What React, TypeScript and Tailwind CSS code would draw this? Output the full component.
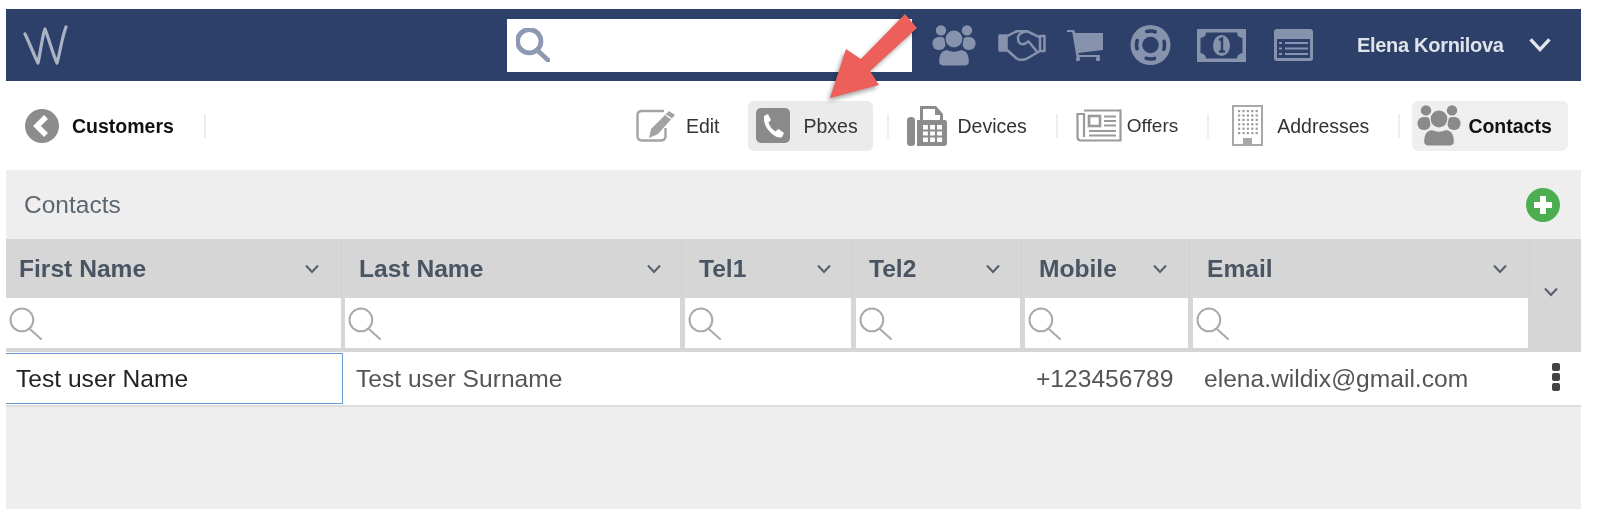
import { JSX } from "react";

const font = "font-['Liberation_Sans',Arial,sans-serif]";

function WLogo(): JSX.Element {
  return (
    <svg width="46" height="41" viewBox="0 0 46 41" fill="none" stroke="#aab2c4" strokeWidth="3.2" strokeLinejoin="round" strokeLinecap="round">
      <path d="M2 9 C6 17 11 30 15 38 C17 30 19 12 22 4 C26 14 30 30 34 38 C37 28 39 12 43 2" />
    </svg>
  );
}

function SearchGlass({ size, color, width }: { size: number; color: string; width: number }): JSX.Element {
  return (
    <svg width={size} height={size} viewBox="0 0 32 32" fill="none" stroke={color} strokeWidth={width} strokeLinecap="round">
      <circle cx="12.5" cy="12.5" r="11" />
      <path d="M20 21 L31 31" />
    </svg>
  );
}

function People({ color, bg, size = 44 }: { color: string; bg: string; size?: number }): JSX.Element {
  return (
    <svg width={size} height={(size * 41) / 44} viewBox="0 0 44 41" fill={color}>
      <circle cx="9" cy="5.4" r="5.2" />
      <circle cx="35" cy="5.4" r="5.2" />
      <rect x="0.5" y="12" width="13" height="13" rx="6" />
      <rect x="30.5" y="12" width="13" height="13" rx="6" />
      <path d="M5 14 Q9 10 13 14 V22 H5 Z M31 14 Q35 10 39 14 V22 H31 Z" />
      <circle cx="22" cy="14" r="9" stroke={bg} strokeWidth="1.2" />
      <path d="M6.5 36 Q6.5 25.5 15 24.5 Q22 28 29 24.5 Q37.5 25.5 37.5 36 Q37.5 41 33 41 H11 Q6.5 41 6.5 36 Z" stroke={bg} strokeWidth="1.2" />
    </svg>
  );
}

function Handshake(): JSX.Element {
  return (
    <svg width="48" height="31" viewBox="0 0 48 31" fill="none" stroke="#8792ad" strokeWidth="2.5" strokeLinejoin="round" strokeLinecap="round">
      <path d="M1.5 5.5 H8.5 V20.5 H1.5 Z" fill="#8792ad" />
      <path d="M42 6 H46.5 V21 H42" />
      <path d="M8.7 6.3 L17 2 Q20 0.8 24 1 H28.7 L42 7.3 V21 L30 28 Q24 31.5 18.7 28.5 L8.7 19.7" />
      <path d="M28.7 1.3 Q21 3 20 7 Q19.5 11 22 13.5 Q26 15.5 30.3 11.3 L38.7 21.3" />
    </svg>
  );
}

function Cart(): JSX.Element {
  return (
    <svg width="36" height="31" viewBox="0 0 36 31" fill="#8792ad">
      <path d="M0 0 H7 L8.5 3 H36 V20 L11.5 23 L12 25 H33 V27 H9.5 L5.2 2 H0 Z" />
      <circle cx="11" cy="29" r="2.2" />
      <circle cx="31" cy="29" r="2.2" />
    </svg>
  );
}

function Lifebuoy(): JSX.Element {
  return (
    <svg width="41" height="40" viewBox="0 0 41 40">
      <circle cx="20.5" cy="20" r="20" fill="#8792ad" />
      <circle cx="20.5" cy="20" r="8.3" fill="#2c4069" />
      <circle cx="20.5" cy="20" r="14" fill="none" stroke="#2c4069" strokeWidth="3.6" strokeLinecap="round" strokeDasharray="8.5 13.5" strokeDashoffset="4.25" />
    </svg>
  );
}

function Money(): JSX.Element {
  return (
    <svg width="49" height="33" viewBox="0 0 49 33">
      <rect width="49" height="33" fill="#8792ad" />
      <path d="M9 3.5 H40 Q40 8 45.5 9 V24 Q40 25 40 29.5 H9 Q9 25 3.5 24 V9 Q9 8 9 3.5 Z" fill="#2c4069" />
      <ellipse cx="24.5" cy="16.5" rx="8.5" ry="10.5" fill="#8792ad" />
      <path d="M22 11 L25 9.5 V22 M22 22.5 H28" fill="none" stroke="#2c4069" strokeWidth="2.4" />
    </svg>
  );
}

function ListCard(): JSX.Element {
  return (
    <svg width="39" height="32" viewBox="0 0 39 32">
      <rect width="39" height="32" rx="3" fill="#8792ad" />
      <rect x="3" y="10" width="33" height="19" fill="#2c4069" />
      <path d="M5 14 H8 M11 14 H34 M5 19.5 H8 M11 19.5 H34 M5 25 H8 M11 25 H34" stroke="#8792ad" strokeWidth="2" />
    </svg>
  );
}

function BackCircle(): JSX.Element {
  return (
    <svg width="34" height="34" viewBox="0 0 34 34">
      <circle cx="17" cy="17" r="17" fill="#8c8c8c" />
      <path d="M21 8 L12 17 L21 26" fill="none" stroke="#fff" strokeWidth="5.5" />
    </svg>
  );
}

function EditIcon(): JSX.Element {
  return (
    <svg width="40" height="33" viewBox="0 0 40 33" fill="none">
      <path d="M28 2 H6 Q1.5 2 1.5 6 V27 Q1.5 31.5 6 31.5 H25 Q29.5 31.5 29.5 27 V19" stroke="#a3a3a3" strokeWidth="2.4" />
      <path d="M33 2 L39 6 L22 25 L13 29 L15 20 Z" fill="#a3a3a3" />
      <path d="M30 6 L35.5 10" stroke="#fff" strokeWidth="1.4" />
    </svg>
  );
}

function PhoneSquare(): JSX.Element {
  return (
    <svg width="34" height="35" viewBox="0 0 34 35">
      <rect width="34" height="35" rx="5" fill="#8a8a8a" />
      <path d="M8 8 L12 6 L15 12 L12.5 14.5 Q14 20 19.5 23.5 L22.5 21 L28 25 L26 29 Q22 31 15 25 Q7 18 8 8 Z" fill="#fff" />
    </svg>
  );
}

function FaxIcon(): JSX.Element {
  return (
    <svg width="40" height="40" viewBox="0 0 40 40" fill="#8c8c8c">
      <rect x="0" y="11" width="8" height="29" rx="3.5" />
      <path d="M13 0 H29 L36 8 V14 H38 Q40 14 40 17 V37 Q40 40 37 40 H10 V14 H13 Z" />
      <path d="M16 3 H28 V9 H33 V14 H16 Z" fill="#fff" />
      <path d="M16 19 H35 V36 H16 Z" fill="#fff" />
      <path d="M22 19 V36 M29 19 V36 M16 24.5 H35 M16 30.5 H35" stroke="#8c8c8c" strokeWidth="2.2" />
    </svg>
  );
}

function NewspaperIcon(): JSX.Element {
  return (
    <svg width="46" height="33" viewBox="0 0 46 33" fill="none" stroke="#9a9a9a" strokeWidth="2.2">
      <path d="M8 1.5 H44.5 V31.5 H5 Q1.5 31.5 1.5 28 V5 H8 V28" />
      <rect x="13" y="7" width="11" height="10" strokeWidth="2.6" />
      <path d="M28 7.5 H40 M28 12 H40 M28 16.5 H40 M13 22 H40 M13 26.5 H40" />
    </svg>
  );
}

function BuildingIcon(): JSX.Element {
  const dots: JSX.Element[] = [];
  for (let r = 0; r < 6; r++) {
    for (let c = 0; c < 5; c++) {
      dots.push(<rect key={`${r}-${c}`} x={6 + c * 4.4} y={5 + r * 4.4} width="2.2" height="2.2" fill="#9c9c9c" />);
    }
  }
  return (
    <svg width="31" height="41" viewBox="0 0 31 41" fill="none">
      <rect x="1" y="1" width="29" height="39" stroke="#a8a8a8" strokeWidth="2" />
      {dots}
      <path d="M11 40 V33 H20 V40 Z" fill="#a8a8a8" />
    </svg>
  );
}

function PlusCircle(): JSX.Element {
  return (
    <svg width="34" height="34" viewBox="0 0 34 34">
      <circle cx="17" cy="17" r="17" fill="#4cae50" />
      <path d="M17 8 V26 M8 17 H26" stroke="#fff" strokeWidth="6" />
    </svg>
  );
}

function Chevron({ size = 14, color = "#56606c", width = 2 }: { size?: number; color?: string; width?: number }): JSX.Element {
  return (
    <svg width={size} height={(size * 10) / 14} viewBox="0 0 14 10" fill="none" stroke={color} strokeWidth={width}>
      <path d="M1 1.5 L7 8 L13 1.5" />
    </svg>
  );
}

function Divider({ className }: { className: string }): JSX.Element {
  return <div className={`h-6 w-0.5 bg-[#eeeeee] ${className}`} />;
}

const columns: { title: string; pad: string }[] = [
  { title: "First Name", pad: "pl-[13px] pr-[22px]" },
  { title: "Last Name", pad: "pl-[17px] pr-[20px]" },
  { title: "Tel1", pad: "pl-[17px] pr-[21px]" },
  { title: "Tel2", pad: "pl-[16px] pr-[21px]" },
  { title: "Mobile", pad: "pl-[17px] pr-[22px]" },
  { title: "Email", pad: "pl-[17px] pr-[22px]" },
];

const headerCols = "grid-cols-[336px_340px_171px_169px_168px_340px]";

export default function App(): JSX.Element {
  return (
    <div className={`relative h-[531px] w-[1600px] overflow-hidden bg-white pl-[6px] pr-[19px] pt-[9px] ${font} blur-[0.4px]`}>
      {/* Top bar */}
      <div className="flex h-[72px] items-center bg-[#2c4069]">
        <div className="ml-[17px] w-[46px]">
          <WLogo />
        </div>
        <div className="ml-[438px] flex h-[53px] w-[405px] items-center bg-white pl-[9px]">
          <SearchGlass size={34} color="#8d99b3" width={4.5} />
        </div>
        <div className="ml-[20px] flex items-center">
          <People color="#8792ad" bg="#2c4069" />
          <div className="ml-[22px]">
            <Handshake />
          </div>
          <div className="ml-[21px]">
            <Cart />
          </div>
          <div className="ml-[27px]">
            <Lifebuoy />
          </div>
          <div className="ml-[26px]">
            <Money />
          </div>
          <div className="ml-[28px]">
            <ListCard />
          </div>
        </div>
        <span className="ml-[44px] text-[20px] font-bold tracking-[-0.3px] text-[#dfe3ea]">Elena Kornilova</span>
        <div className="ml-[25px]">
          <Chevron size={22} color="#e4e7ec" width={2.2} />
        </div>
      </div>

      {/* Toolbar */}
      <div className="flex h-[89px] items-center text-[19.5px] text-[#333333]">
        <div className="ml-[19px]">
          <BackCircle />
        </div>
        <span className="ml-[13px] pt-[2px] font-bold text-[#111111]">Customers</span>
        <Divider className="ml-[30px]" />
        <div className="ml-[430px]">
          <EditIcon />
        </div>
        <span className="ml-[10px] pt-[2px]">Edit</span>
        <div className="ml-[29px] flex h-[50px] w-[125px] items-center rounded-md bg-[#ebebeb] pl-[8px]">
          <PhoneSquare />
          <span className="ml-[13px] pt-[2px]">Pbxes</span>
        </div>
        <Divider className="ml-[14px]" />
        <div className="ml-[18px]">
          <FaxIcon />
        </div>
        <span className="ml-[10px] pt-[2px]">Devices</span>
        <Divider className="ml-[29px]" />
        <div className="ml-[18px]">
          <NewspaperIcon />
        </div>
        <span className="ml-[5px] pt-[2px] text-[19px]">Offers</span>
        <Divider className="ml-[29px]" />
        <div className="ml-[23px]">
          <BuildingIcon />
        </div>
        <span className="ml-[14px] pt-[2px]">Addresses</span>
        <Divider className="ml-[29px]" />
        <div className="ml-[12px] flex h-[50px] w-[156px] items-center rounded-md bg-[#efefef] pl-[5px]">
          <People color="#8a8a8a" bg="#efefef" />
          <span className="ml-[7px] pt-[2px] font-bold text-[#111111]">Contacts</span>
        </div>
      </div>

      {/* Contacts panel */}
      <div className="h-[339px] bg-[#eeeeee]">
        <div className="flex h-[69px] items-center justify-between pl-[18px] pr-[21px]">
          <span className="pt-[2px] text-[24.5px] text-[#5b6670]">Contacts</span>
          <PlusCircle />
        </div>

        <div className="flex h-[113px] bg-[#d6d6d6]">
          <div className={`grid flex-1 ${headerCols} grid-rows-[59px_50px]`}>
            {columns.map((col) => (
              <div key={col.title} className={`flex items-center justify-between border-r border-[#d0d0d0] pt-[1px] ${col.pad}`}>
                <span className="text-[24.6px] font-bold text-[#4a5563]">{col.title}</span>
                <Chevron />
              </div>
            ))}
            {columns.map((col, index) => (
              <div key={col.title} className={`flex items-center bg-white pl-[3px] ${index === 0 ? "mr-[1px]" : "ml-[3px] mr-[2px]"}`}>
                <SearchGlass size={33} color="#aaaaaa" width={2} />
              </div>
            ))}
          </div>
          <div className="flex w-[51px] items-center pb-[7px] pl-[14px]">
            <Chevron />
          </div>
        </div>

        <div className="relative grid h-[53px] grid-cols-[336px_340px_171px_169px_168px_340px_51px] items-center bg-white text-[24.6px] text-[#555555]">
          <div className="flex h-[51px] w-[337px] items-center border-y border-r border-[#6a9bd1] pl-[10px] pt-[1px] text-[#222222]">Test user Name</div>
          <div className="pl-[14px] pt-[1px]">Test user Surname</div>
          <div />
          <div />
          <div className="pl-[14px] pt-[1px]">+123456789</div>
          <div className="pl-[14px] pt-[1px]">elena.wildix@gmail.com</div>
          <div className="flex flex-col items-center gap-[2px] pb-[4px]">
            <div className="h-2 w-2 rounded-[2px] bg-[#444444]" />
            <div className="h-2 w-2 rounded-[2px] bg-[#444444]" />
            <div className="h-2 w-2 rounded-[2px] bg-[#444444]" />
          </div>
        </div>
        <div className="h-[2px] bg-[#dddddd]" />
      </div>

      {/* Annotation arrow */}
      <svg className="absolute left-[820px] top-[8px] drop-shadow-[-2px_3px_2px_rgba(0,0,0,0.35)]" width="110" height="100" viewBox="0 0 110 100">
        <path d="M10 90 L26 41 L41 51 L85 6 L97 20 L50 63 L59 77 Z" fill="#ec5f5b" />
      </svg>
    </div>
  );
}
